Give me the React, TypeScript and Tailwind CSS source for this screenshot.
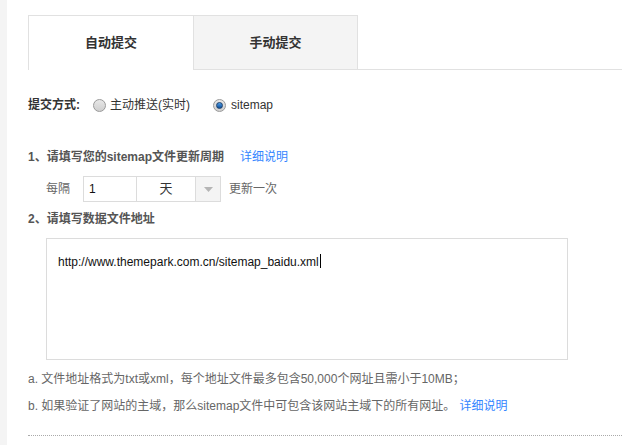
import { useState } from 'react';

const font = { fontFamily: '"Liberation Sans", "Noto Sans CJK SC", sans-serif' };

function Radio({ checked }: { checked: boolean }) {
  return (
    <span className="relative inline-flex h-[13px] w-[13px] items-center justify-center rounded-full border border-[#9a9a9a] bg-gradient-to-b from-[#e8e8e8] to-[#cfcfcf]">
      {checked && (
        <span className="h-[7px] w-[7px] rounded-full border border-[#1c3f6b] bg-gradient-to-b from-[#4d9ee8] to-[#0d4f9a]" />
      )}
    </span>
  );
}

export default function App() {
  const [tab] = useState(0);
  const [mode] = useState<'push' | 'sitemap'>('sitemap');

  return (
    <div className="flex h-[445px] w-[622px] overflow-hidden bg-white text-[12px]" style={font}>
      <div className="w-[7px] shrink-0 bg-[#f4f4f4]" />
      <div className="flex flex-1 flex-col pl-[21px]">
        {/* tabs */}
        <div className="mt-[15px] flex h-[55px]">
          <div
            className={`flex w-[165px] items-center justify-center border-l border-t border-[#e1e1e1] text-[13px] font-bold text-[#333] ${tab === 0 ? 'bg-white' : 'border-b bg-[#f4f4f4]'}`}
          >
            自动提交
          </div>
          <div className="flex w-[165px] items-center justify-center border border-[#e1e1e1] bg-[#f4f4f4] text-[13px] font-bold text-[#333]">
            手动提交
          </div>
          <div className="flex-1 border-b border-[#e1e1e1]" />
        </div>

        {/* mode */}
        <div className="mt-[25px] flex h-[20px] items-center">
          <span className="font-bold text-[#333]">提交方式:</span>
          <span className="ml-[13px] flex items-center gap-[4px] text-[#333]">
            <Radio checked={mode === 'push'} />
            主动推送(实时)
          </span>
          <span className="ml-[23px] flex items-center gap-[5px] text-[#333]">
            <Radio checked={mode === 'sitemap'} />
            sitemap
          </span>
        </div>

        {/* 1 */}
        <div className="mt-[32px] flex h-[20px] items-center">
          <span className="font-bold text-[#555]">1、请填写您的sitemap文件更新周期</span>
          <a className="ml-[16px] text-[#3385ff]">详细说明</a>
        </div>
        <div className="ml-[18px] mt-[9px] flex h-[26px] items-center text-[#666]">
          <span>每隔</span>
          <div className="ml-[13px] flex h-[26px] w-[54px] items-center border border-[#dcdcdc] pl-[5px] text-[#111]">
            1
          </div>
          <div className="flex h-[26px] w-[84px] border border-l-0 border-[#dcdcdc]">
            <span className="flex flex-1 items-center justify-center text-[13px] text-[#333]">天</span>
            <span className="flex w-[25px] items-center justify-center border-l border-[#dcdcdc] bg-[#f4f4f4]">
              <svg width="9" height="5" viewBox="0 0 9 5">
                <path d="M0 0h9L4.5 5z" fill="#b5b5b5" />
              </svg>
            </span>
          </div>
          <span className="ml-[8px]">更新一次</span>
        </div>

        {/* 2 */}
        <div className="mt-[7px] flex h-[20px] items-center font-bold text-[#555]">2、请填写数据文件地址</div>
        <div className="ml-[18px] mt-[9px] h-[122px] w-[522px] border border-[#dcdcdc] px-[11px] pt-[13px] text-[#111]">
          <span>http://www.themepark.com.cn/sitemap_baidu.xml</span>
          <span className="ml-[1px] inline-block h-[14px] w-[1px] translate-y-[2px] bg-black" />
        </div>

        <div className="mt-[9px] flex h-[20px] items-center text-[#666]">
          a. 文件地址格式为txt或xml，每个地址文件最多包含50,000个网址且需小于10MB；
        </div>
        <div className="mt-[7px] flex h-[20px] items-center text-[#666]">
          b. 如果验证了网站的主域，那么sitemap文件中可包含该网站主域下的所有网址。
          <a className="ml-[4px] text-[#3385ff]">详细说明</a>
        </div>
        <div className="mt-[19px] border-t border-dotted border-[#aaa]" />
      </div>
    </div>
  );
}
